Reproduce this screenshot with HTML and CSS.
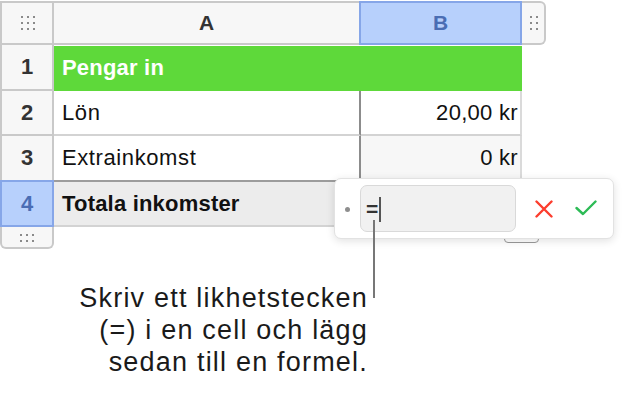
FILE: index.html
```html
<!DOCTYPE html>
<html>
<head>
	<meta charset="utf-8">
	<title>Formel</title>
	<link rel="stylesheet" href="styles.css">
</head>
<body>
	<div id="canvas">
		<div class="Sheet">
			<div class="Corner"><span class="Dots Dots3x3"></span></div>
			<div class="ColHead">A</div>
			<div class="ColHead Selected">B</div>
			<div class="SideHandle"><span class="Dots Dots2x3"></span></div>

			<div class="RowHead">1</div>
			<div class="Cell Title">Pengar in</div>
			<div class="Cell Title Last"></div>
			<div class="Blank"></div>

			<div class="RowHead">2</div>
			<div class="Cell Divider">Lön</div>
			<div class="Cell Num Last">20,00 kr</div>
			<div class="Blank"></div>

			<div class="RowHead">3</div>
			<div class="Cell Divider Above">Extrainkomst</div>
			<div class="Cell Num Last Shade Above">0 kr</div>
			<div class="Blank"></div>

			<div class="RowHead Selected">4</div>
			<div class="Cell Footer Divider">Totala inkomster</div>
			<div class="Cell Footer Last"></div>
			<div class="Blank"></div>

			<div class="BottomHandle"><span class="Dots Dots3x2"></span></div>
		</div>

		<div id="cornerhandle"></div>

		<div id="editor">
			<span class="Bullet"></span>
			<div class="Field">
				<span class="Equals">=</span><span class="Caret"></span>
			</div>
			<svg class="Cancel" width="18" height="18" viewBox="0 0 18 18">
				<path d="M1.5 1.5 L16.5 16.5 M16.5 1.5 L1.5 16.5" stroke="#fc3d2e" stroke-width="2.4" fill="none" stroke-linecap="round"/>
			</svg>
			<svg class="Accept" width="22" height="16" viewBox="0 0 22 16">
				<path d="M1.5 8 L8 14 L20.5 1.5" stroke="#2dbb56" stroke-width="2.4" fill="none" stroke-linecap="round" stroke-linejoin="round"/>
			</svg>
		</div>

		<div id="leader"></div>

		<p id="caption">Skriv ett likhetstecken<br>(=) i en cell och lägg<br>sedan till en formel.</p>
	</div>
</body>
</html>
```

FILE: styles.css
```css
*
{
	padding: 0px;
	margin: 0px;
	box-sizing: border-box;
}
body
{
	color: #1b1b1b;
	background-color: white;
	font-family: "Liberation Sans", Arial, Helvetica, sans-serif;
}
#canvas
{
	position: relative;
	width: 630px;
	height: 394px;
	padding-top: 1px;
}
.Sheet
{
	display: grid;
	grid-template-columns: 54px 307px 161px 24px;
	grid-template-rows: 44px 46px 45px 46px 45px 22px;
	font-size: 22px;
	letter-spacing: 0.6px;
	color: #111111;
}
.Corner, .ColHead, .SideHandle, .RowHead, .BottomHandle
{
	background-color: #f7f7f7;
	border: 0px solid #c9c9c9;
	display: flex;
	align-items: center;
	justify-content: center;
	font-weight: bold;
	color: #333333;
	letter-spacing: 0px;
}
.Corner
{
	border-width: 2px;
}
.ColHead
{
	border-width: 2px 2px 2px 0px;
	font-size: 21px;
}
.ColHead.Selected
{
	background-color: #b7d0fc;
	border: 2px solid #86a6e8;
	margin-left: -2px;
	color: #4a6db4;
}
.SideHandle
{
	border-width: 2px 2px 2px 0px;
	border-radius: 0px 6px 6px 0px;
	justify-content: flex-start;
	padding-left: 6px;
}
.RowHead
{
	border-width: 0px 2px 2px 2px;
}
.RowHead.Selected
{
	background-color: #b7d0fc;
	border: 2px solid #86a6e8;
	margin-top: -2px;
	color: #4a6db4;
}
.BottomHandle
{
	border-width: 0px 2px 2px 2px;
	border-radius: 0px 0px 6px 6px;
}
.Blank
{
	background: none;
}
.Cell
{
	display: flex;
	align-items: center;
	padding: 0px 8px 0px 8px;
	border-bottom: 2px solid #d3d3d3;
	background-color: white;
}
.Cell.Last
{
	border-right: 2px solid #dadada;
}
.Cell.Num
{
	justify-content: flex-end;
	padding-right: 2px;
	letter-spacing: 0.3px;
}
.Cell.Divider
{
	border-right: 2px solid #8c8c8c;
}
.Cell.Title
{
	background-color: #5ed93a;
	color: white;
	font-weight: bold;
	border-bottom-color: #5ed93a;
	margin-top: 1px;
	margin-bottom: -1px;
	letter-spacing: 0.2px;
}
.Cell.Title.Last
{
	border-right-color: #5ed93a;
}
.Cell.Above
{
	border-bottom-color: #9c9c9c;
}
.Cell.Shade
{
	background-color: #f7f7f7;
}
.Cell.Footer
{
	background-color: #ececec;
	font-weight: bold;
	letter-spacing: 0.2px;
}
.Dots
{
	display: block;
	background-image: radial-gradient(circle, #8a8a8a 1.1px, transparent 1.4px);
	background-size: 6px 6px;
}
.Dots3x3
{
	width: 18px;
	height: 18px;
	margin-left: 2px;
}
.Dots2x3
{
	width: 10px;
	height: 18px;
}
.Dots3x2
{
	width: 18px;
	height: 10px;
}
#cornerhandle
{
	position: absolute;
	left: 504px;
	top: 224px;
	width: 35px;
	height: 19px;
	border: 1.5px solid #9a9a9a;
	border-radius: 4px;
	background-color: white;
}
#editor
{
	position: absolute;
	left: 334px;
	top: 178px;
	width: 280px;
	height: 61px;
	display: flex;
	align-items: center;
	padding: 0px 10px 0px 10px;
	background-color: white;
	border: 1px solid #e2e2e2;
	border-radius: 7px;
	box-shadow: 0px 2px 8px rgba(0, 0, 0, 0.12);
}
.Bullet
{
	width: 5px;
	height: 5px;
	border-radius: 50%;
	background-color: #8e8e8e;
	margin-right: 10px;
	margin-top: 1px;
}
.Field
{
	width: 156px;
	height: 47px;
	display: flex;
	align-items: center;
	padding-left: 5px;
	background-color: #f1f1f1;
	border: 1px solid #d9d9d9;
	border-radius: 7px;
}
.Equals
{
	font-size: 21px;
	font-weight: bold;
	color: #333333;
}
.Caret
{
	display: block;
	width: 1.5px;
	height: 25px;
	margin-left: 1px;
	margin-top: 2px;
	background-color: #555555;
}
.Cancel
{
	margin-left: 19px;
	margin-top: 1px;
}
.Accept
{
	margin-left: 22px;
	margin-top: -2px;
}
#leader
{
	position: absolute;
	left: 373px;
	top: 220px;
	width: 2px;
	height: 78px;
	background-color: #777777;
}
#caption
{
	width: 368px;
	margin-top: 33px;
	text-align: right;
	font-size: 27px;
	line-height: 32px;
	letter-spacing: 1.2px;
	color: #1a1a1a;
}
```
